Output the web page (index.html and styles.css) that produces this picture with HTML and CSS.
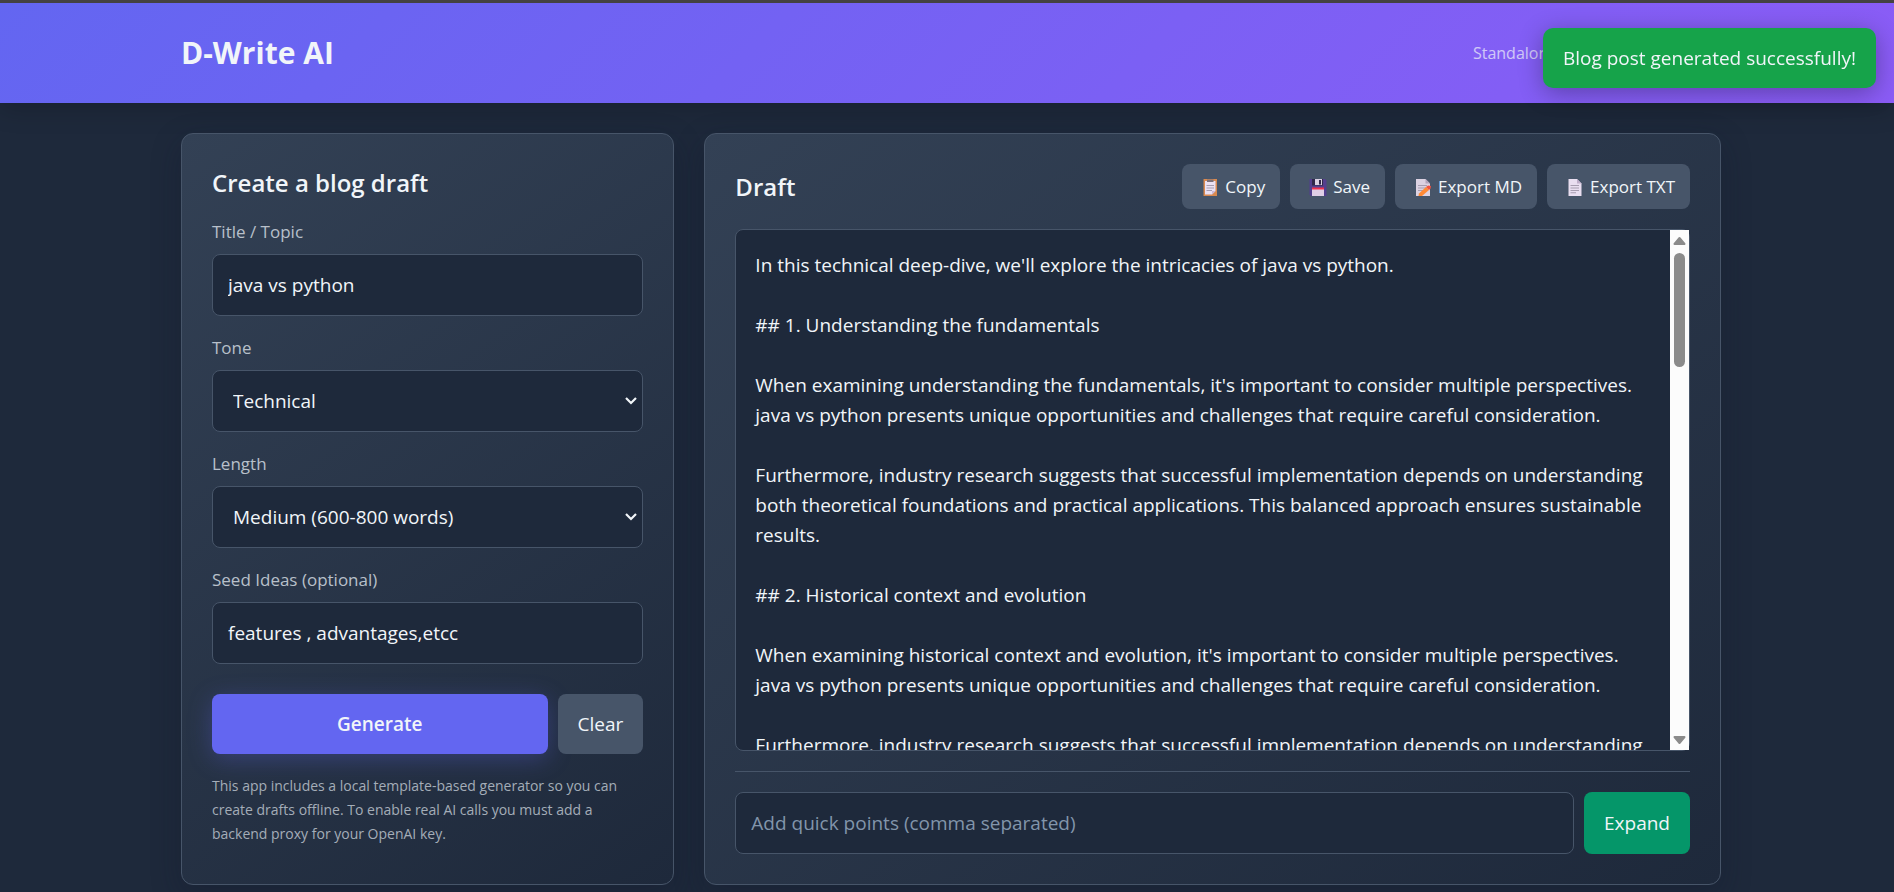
FILE: index.html
```html
<!DOCTYPE html>
<html lang="en">
<head>
<meta charset="utf-8">
<title>D-Write AI</title>
<link rel="stylesheet" href="styles.css">
</head>
<body>
<header class="site-header">
  <div class="container header-row">
    <h1 class="brand">D-Write AI</h1>
    <div class="tagline">Standalone • Local text generator</div>
  </div>
</header>
<main class="container layout">
  <section class="panel">
    <h2 class="panel-title">Create a blog draft</h2>
    <form class="form">
      <label class="label" for="topic">Title / Topic</label>
      <input class="field" id="topic" type="text" value="java vs python">
      <label class="label" for="tone">Tone</label>
      <select class="field select" id="tone"><option>Technical</option></select>
      <label class="label" for="length">Length</label>
      <select class="field select" id="length"><option>Medium (600-800 words)</option></select>
      <label class="label" for="seed">Seed Ideas (optional)</label>
      <input class="field" id="seed" type="text" value="features , advantages,etcc">
      <div class="form-actions">
        <button class="btn btn-primary" type="button">Generate</button>
        <button class="btn btn-muted" type="button">Clear</button>
      </div>
    </form>
    <p class="note">This app includes a local template-based generator so you can create drafts offline. To enable real AI calls you must add a backend proxy for your OpenAI key.</p>
  </section>
  <section class="panel panel-draft">
    <div class="draft-head">
      <h2 class="draft-title">Draft</h2>
      <div class="tools">
        <button class="tool" type="button">
          <svg class="icon" viewBox="0 0 20 20" aria-hidden="true"><path fill="#d9894f" d="M3.500 2h13.500v17H3.500z"/><path fill="#ebe0f2" d="M5 4h10.500v10l-3.500 3.500H5z"/><path fill="#cbb9d8" d="M12 17.500V14h3.500z"/><path fill="#7d7078" d="M7 2.500h6.500V5H7z"/><path fill="#a79db0" d="M6.500 8h7.500v1H6.500zM6.500 10.500h7.500v1H6.500zM6.500 13H12v1H6.500z"/></svg>
          Copy</button>
        <button class="tool" type="button">
          <svg class="icon" viewBox="0 0 20 20" aria-hidden="true"><path fill="#533f8e" d="M1.500 2h15.500l1.500 1.500V19H3l-1.500-1.500z"/><path fill="#30284a" d="M4 2h11v6.500H4z"/><path fill="#d9d0e2" d="M7 2h7v6H7z"/><path fill="#30284a" d="M11 3h2v4.500h-2z"/><path fill="#e0cfe6" d="M4 12h12v7H4z"/><path fill="#f0324f" d="M4 10.500h12v2H4z"/></svg>
          Save</button>
        <button class="tool" type="button">
          <svg class="icon" viewBox="0 0 20 20" aria-hidden="true"><path fill="#dcd2e2" d="M3 2h9.500L17 6.500V19H3z"/><path fill="#b3a5bd" d="M12.500 2L17 6.500h-4.500z"/><path fill="#a79db0" d="M5 8h9v1H5zM5 10.500h8v1H5zM5 13h5v1H5z"/><path fill="#ff8a35" d="M6 16.500l7-6.500 3 3-7 6H5.500z"/><path fill="#f4523f" d="M13 10l2-1.500 3 .5-.5 2.500-1.500 1.500z"/></svg>
          Export MD</button>
        <button class="tool" type="button">
          <svg class="icon" viewBox="0 0 20 20" aria-hidden="true"><path fill="#e9def0" d="M3.500 2H12l4.500 4.500V19h-13z"/><path fill="#bfaeca" d="M12 2l4.500 4.500H12z"/><path fill="#a79db0" d="M5.500 8H14v1H5.500zM5.500 10.500H14v1H5.500zM5.500 13H14v1H5.500zM5.500 15.200H11v1H5.500z"/></svg>
          Export TXT</button>
      </div>
    </div>
    <div class="draft-frame">
      <textarea class="draft" aria-label="Draft text" spellcheck="false">In this technical deep-dive, we'll explore the intricacies of java vs python.

## 1. Understanding the fundamentals

When examining understanding the fundamentals, it's important to consider multiple perspectives. java vs python presents unique opportunities and challenges that require careful consideration.

Furthermore, industry research suggests that successful implementation depends on understanding both theoretical foundations and practical applications. This balanced approach ensures sustainable results.

## 2. Historical context and evolution

When examining historical context and evolution, it's important to consider multiple perspectives. java vs python presents unique opportunities and challenges that require careful consideration.

Furthermore, industry research suggests that successful implementation depends on understanding both theoretical foundations and practical applications. This balanced approach ensures sustainable results.</textarea>
      <div class="scrollbar" aria-hidden="true">
        <svg class="scroll-arrow" viewBox="0 0 13 9"><path d="M6.500 1.500L11.500 7.500H1.500z"/></svg>
        <div class="scroll-lane"><div class="scroll-thumb"></div></div>
        <svg class="scroll-arrow" viewBox="0 0 13 9"><path d="M6.500 7.500L11.500 1.500H1.500z"/></svg>
      </div>
    </div>
    <div class="expand-row">
      <input class="field" type="text" aria-label="Quick points" placeholder="Add quick points (comma separated)">
      <button class="btn btn-green" type="button">Expand</button>
    </div>
  </section>
</main>
<div class="toast" role="status">Blog post generated successfully!</div>
</body>
</html>
```

FILE: styles.css
```css
* {
  box-sizing: border-box;
}

html {
  overflow: hidden;
}

body {
  margin: 0;
  border-top: 3px solid #444242;
  background: #1e293b;
  color: #f1f5f9;
  font: 19px/30px "Segoe UI", "Open Sans", "Noto Sans", sans-serif;
}

h1,
h2,
p {
  margin: 0;
}

button,
input,
select,
textarea {
  font: inherit;
  color: inherit;
}

.container {
  max-width: 1608px;
  margin: 0 auto;
  padding: 0 30px 0 38px;
}

.site-header {
  background: linear-gradient(135deg, #6366f1, #8b5cf6);
  box-shadow: 0 5px 25px rgba(0, 0, 0, 0.2);
}

.header-row {
  display: flex;
  align-items: center;
  justify-content: space-between;
  min-height: 100px;
}

.brand {
  font-size: 30px;
  line-height: 40px;
  font-weight: 700;
}

.tagline {
  font-size: 16px;
  line-height: 25px;
  opacity: 0.7;
}

.layout {
  display: grid;
  grid-template-columns: repeat(3, minmax(0, 1fr));
  gap: 30px;
  padding-top: 30px;
  padding-bottom: 30px;
}

.panel {
  display: flex;
  flex-direction: column;
  padding: 30px;
  border: 1px solid #475569;
  border-radius: 12px;
  background: linear-gradient(145deg, #334155, #1e293b);
  box-shadow: 0 10px 30px rgba(15, 23, 42, 0.3);
}

.panel-draft {
  grid-column: span 2;
}

.panel-title,
.draft-title {
  font-size: 24px;
  line-height: 38px;
  font-weight: 600;
}

.panel-title {
  margin-bottom: 18px;
}

.form {
  display: flex;
  flex-direction: column;
}

.label {
  margin-bottom: 10px;
  font-size: 17px;
  line-height: 24px;
  color: #b8c0ca;
}

.field {
  width: 100%;
  height: 62px;
  margin: 0 0 20px;
  padding: 0 15px;
  border: 1px solid #475569;
  border-radius: 8px;
  background: #1e293b;
  outline: none;
}

.field::placeholder {
  color: #8295ab;
  opacity: 1;
}

.select {
  padding: 0 30px 0 20px;
  appearance: none;
  background: #1e293b url("data:image/svg+xml,%3Csvg xmlns='http://www.w3.org/2000/svg' viewBox='0 0 12 8'%3E%3Cpath d='M1 1L6 6L11 1' fill='none' stroke='%23f1f5f9' stroke-width='2.200'/%3E%3C/svg%3E") right 5px center / 12px 8px no-repeat;
}

.form-actions {
  display: flex;
  gap: 10px;
  margin-top: 10px;
}

.btn {
  height: 60px;
  padding: 0 20px;
  border: 0;
  border-radius: 8px;
}

.btn-primary {
  flex: 1;
  background: #6366f1;
  font-weight: 600;
  box-shadow: 0 5px 25px rgba(99, 102, 241, 0.3);
}

.btn-muted {
  background: #475569;
}

.btn-green {
  height: 62px;
  background: #059669;
}

.note {
  margin-top: 20px;
  font-size: 14px;
  line-height: 24px;
  color: #a4adb8;
}

.draft-head {
  display: flex;
  align-items: center;
  justify-content: space-between;
  margin-bottom: 20px;
}

.tools {
  display: flex;
  gap: 10px;
}

.tool {
  display: flex;
  align-items: center;
  gap: 5px;
  height: 45px;
  padding: 0 15px 0 18px;
  border: 0;
  border-radius: 8px;
  background: #475569;
  font-size: 17px;
}

.icon {
  width: 20px;
  height: 20px;
}

.draft-frame {
  display: flex;
  flex: 1;
  min-height: 522px;
  border: 1px solid #475569;
  border-radius: 8px;
  background: #1e293b;
}

.draft {
  flex: 1;
  min-width: 0;
  padding: 20px 19px;
  border: 0;
  background: transparent;
  resize: none;
  outline: none;
}

.scrollbar {
  display: flex;
  flex-direction: column;
  align-items: center;
  gap: 7px;
  width: 19px;
  padding: 6px 0 5px;
  background: #fcfcfc;
}

.scroll-arrow {
  width: 13px;
  height: 10px;
  fill: #8b8b8b;
  stroke: #8b8b8b;
  stroke-width: 2;
  stroke-linejoin: round;
}

.scroll-lane {
  flex: 1;
  width: 11px;
}

.scroll-thumb {
  height: 24%;
  border-radius: 6px;
  background: #8b8b8b;
}

.expand-row {
  display: flex;
  gap: 10px;
  margin-top: 20px;
  padding-top: 20px;
  border-top: 1px solid #475569;
}

.expand-row .field {
  flex: 1;
  margin: 0;
}

.toast {
  position: fixed;
  top: 28px;
  right: 18px;
  padding: 15px 20px;
  border-radius: 10px;
  background: #16a34a;
  box-shadow: 0 5px 25px rgba(0, 0, 0, 0.3);
}
```
